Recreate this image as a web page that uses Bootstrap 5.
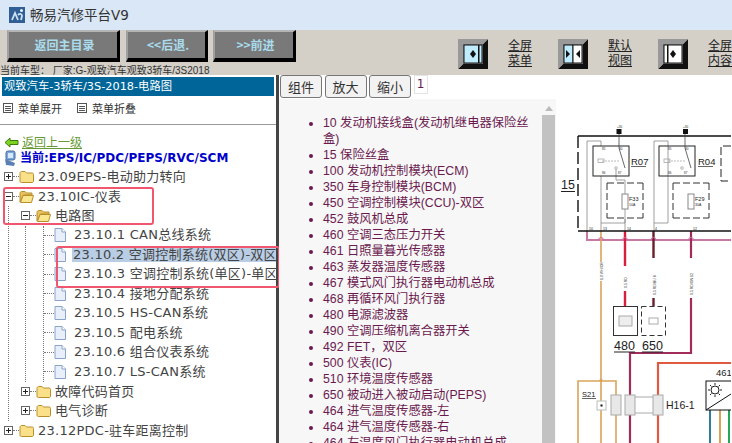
<!DOCTYPE html>
<html lang="zh-CN">
<head>
<meta charset="UTF-8">
<title>畅易汽修平台V9</title>
<link href="https://cdn.jsdelivr.net/npm/bootstrap@5.3.0/dist/css/bootstrap.min.css" rel="stylesheet">
<style>
html, body { height: 100%; overflow: hidden; }
body { font-family: "DejaVu Sans", "Noto Sans CJK SC", sans-serif; font-size: 13px; color: #444; background: #fff; }
.title-bar { height: 30px; background: #d9e7f6; padding-left: 9px; gap: 5px; font-size: 13.5px; color: #333; }
.tool-bar { height: 45px; background: #d4d0c8; overflow: hidden; }
.tool-left { width: 458px; flex: none; }
.tool-btn { height: 32px; background: #797979; color: #a9dcec; font-weight: 700; font-size: 12px; border-style: solid; border-width: 2px 3px 4px 2px; border-color: #b5b5b5 #000 #000 #a0a0a0; border-radius: 0; padding: 0 0 0 3px; font-family: "Noto Sans CJK SC", sans-serif; }
.tool-btn:hover { background: #797979; color: #a9dcec; border-color: #b5b5b5 #000 #000 #a0a0a0; }
.btn-a { width: 113px; margin-left: 7px; }
.btn-b { width: 82px; margin-left: 6px; }
.btn-c { width: 83px; margin-left: 5px; }
.car-line { font-size: 10px; line-height: 11px; height: 13px; padding-top: 3px; color: #333; white-space: nowrap; font-family: "Liberation Sans", "Noto Sans CJK SC", sans-serif; }
.view-group { width: 100px; flex: none; margin-top: 9px; }
.view-label { margin-left: 20px; width: 24px; font-size: 12px; line-height: 15px; color: #222; text-decoration: underline; white-space: nowrap; font-family: "DejaVu Sans", "Noto Sans CJK SC", sans-serif; }
.main-area { height: 368px; }
.left-pane { width: 276px; flex: none; position: relative; }
.split-bar { width: 3px; flex: none; background: #444; }
.pane-head { margin: 2px 2px 0; width: 272px; height: 19px; background: #006699; color: #fff; font-size: 11.3px; line-height: 19px; padding-left: 2px; white-space: nowrap; }
.menu-ops { height: 29px; gap: 15px; padding-left: 3px; font-size: 11px; color: #333; border-bottom: 1px solid #999; padding-bottom: 4px; font-family: "Noto Sans CJK SC", sans-serif; }
.menu-ops span { gap: 5px; }
.op-box { width: 10px; height: 10px; border: 1px solid #555; background: repeating-linear-gradient(#555 0 1px, #fff 1px 2px); background-clip: content-box; padding: 1px; }
.back-link { height: 16px; margin-top: 9px; padding-left: 4px; gap: 3px; font-size: 12px; color: #669933; text-decoration: underline; font-family: "Noto Sans CJK SC", sans-serif; }
.now-line { height: 16px; padding-left: 3px; gap: 2px; font-size: 12px; font-weight: 700; color: #0000cc; white-space: nowrap; }
.tree-box { white-space: nowrap; padding-top: 1px; overflow: hidden; letter-spacing: .25px; }
.tree-row { height: 19.5px; }
.tree-row svg { flex: none; }
.tree-toggle { width: 9px; height: 9px; flex: none; border: 1px solid #666; background: linear-gradient(#222,#222) center/5px 1px no-repeat, #fff; margin-left: 4px; }
.tree-toggle.is-plus { background: linear-gradient(#222,#222) center/5px 1px no-repeat, linear-gradient(#222,#222) center/1px 5px no-repeat, #fff; }
.tree-dots { width: 6px; flex: none; border-top: 1px dotted #777; }
.tree-name { margin-left: 4px; }
.tree-kids { border-left: 1px dotted #777; margin-left: 8px; padding-left: 8px; }
.tree-kids .tree-toggle { margin-left: 4px; }
.leaf-wrap { border-left: 1px dotted #777; margin-left: 8px; padding-left: 17px; }
.leaf-list { border-left: 1px dotted #777; }
.leaf-dots { width: 10px; flex: none; border-top: 1px dotted #777; }
.leaf-name { flex: none; margin-left: 7px; padding: 0 1px; line-height: 14px; }
.leaf-on { background: #b9cde5; margin-left: 6px; }
.mark-box { position: absolute; border: 2px solid #f0566e; border-radius: 3px; pointer-events: none; }
.mark-one { left: 3px; top: 112px; width: 151px; height: 38px; }
.mark-two { left: 56px; top: 171px; width: 224px; height: 42px; }
.right-pane { min-width: 0; }
.tab-strip { height: 24px; gap: 2.5px; padding-left: 1px; }
.tab-btn { width: 42px; height: 23px; padding: 0; font-size: 13px; line-height: 20px; color: #333; background: #f2f2f2; border: 1px solid #777; border-radius: 3px; font-family: "Noto Sans CJK SC", sans-serif; }
.tab-num { width: 14px; height: 19px; border: 1px solid #e4e4e4; text-align: center; line-height: 17px; font-size: 12px; color: #6b1a4f; }
.work-area { height: 344px; }
.part-pane { width: 277px; flex: none; background: #f7f7f7; overflow: hidden; position: relative; }
.part-list { width: 262px; margin: 16px 0 0; padding: 0 10px 0 44px; list-style: disc; font-size: 12.3px; line-height: 16px; color: #6b1a4f; font-family: "Liberation Sans", "Noto Sans CJK SC", sans-serif; }
.scroll-rail { position: absolute; right: 1px; top: 0; bottom: 0; width: 13px; }
.scroll-up { width: 0; height: 0; margin: 7px auto 4px; border: 4px solid transparent; border-top: 0; border-bottom: 5px solid #bbb; }
.scroll-thumb { height: 330px; background: #c2c2c2; }
.wire-map { display: block; flex: none; }
.wire-map text { font-family: "Liberation Sans", sans-serif; fill: #222; }
</style>
</head>
<body>
<div class="title-bar d-flex align-items-center">
  <svg width="16" height="16" viewBox="0 0 16 16"><rect width="16" height="16" fill="#2f5f94"/><path d="M3 13 6 6l3 7M9 8c2-2 4-1 4 1l-1 4" fill="none" stroke="#cfe3f5" stroke-width="1.800"/><circle cx="12.500" cy="3.500" r="1.500" fill="#e7f1fa"/></svg>
  <span>畅易汽修平台V9</span>
</div>
<div class="tool-bar d-flex">
  <div class="tool-left">
    <div class="d-flex">
      <button class="btn tool-btn btn-a">返回主目录</button>
      <button class="btn tool-btn btn-b">&lt;&lt;后退.</button>
      <button class="btn tool-btn btn-c">&gt;&gt;前进</button>
    </div>
    <div class="car-line">当前车型： 厂家:G-观致汽车观致3轿车/3S2018</div>
  </div>
  <div class="view-group d-flex">
    <svg width="30" height="30" viewBox="0 0 30 30"><path d="M0 30 30 30 30 0 25 5 25 25 5 25Z" fill="#111"/><path d="M0 0H30L25 5H5V25L0 30Z" fill="#999"/><rect x="5" y="5" width="20" height="20" fill="#808080"/><rect x="6" y="6" width="18" height="18" fill="#c0ecff" stroke="#111"/><rect x="20" y="6" width="1.500" height="18" fill="#111"/><path d="M12 15 15 11V19ZM15 11 18 15 15 19Z" fill="#111"/></svg>
    <div class="view-label">全屏<br>菜单</div>
  </div>
  <div class="view-group d-flex">
    <svg width="30" height="30" viewBox="0 0 30 30"><path d="M0 30 30 30 30 0 25 5 25 25 5 25Z" fill="#111"/><path d="M0 0H30L25 5H5V25L0 30Z" fill="#999"/><rect x="5" y="5" width="20" height="20" fill="#808080"/><rect x="6" y="6" width="9" height="18" fill="#c0ecff" stroke="#111"/><rect x="15" y="6" width="9" height="18" fill="#fff" stroke="#111"/><path d="M8 11 12 15 8 19ZM22 11 18 15 22 19Z" fill="#111"/></svg>
    <div class="view-label">默认<br>视图</div>
  </div>
  <div class="view-group d-flex">
    <svg width="30" height="30" viewBox="0 0 30 30"><path d="M0 30 30 30 30 0 25 5 25 25 5 25Z" fill="#111"/><path d="M0 0H30L25 5H5V25L0 30Z" fill="#999"/><rect x="5" y="5" width="20" height="20" fill="#808080"/><rect x="6" y="6" width="18" height="18" fill="#fff" stroke="#111"/><rect x="9" y="6" width="1.500" height="18" fill="#111"/><path d="M12 15 15 11V19ZM15 11 18 15 15 19Z" fill="#111"/></svg>
    <div class="view-label">全屏<br>内容</div>
  </div>
</div>
<div class="main-area d-flex">
  <div class="left-pane">
    <div class="pane-head">观致汽车-3轿车/3S-2018-电路图</div>
    <div class="menu-ops d-flex align-items-center">
      <span class="d-flex align-items-center"><i class="op-box"></i>菜单展开</span>
      <span class="d-flex align-items-center"><i class="op-box"></i>菜单折叠</span>
    </div>
    <div class="back-link d-flex align-items-center">
      <svg width="15" height="11" viewBox="0 0 15 11"><path d="M1 5.500 6 1V3.500H14V7.500H6V10Z" fill="#7ed321" stroke="#3c7a10"/></svg>
      <span>返回上一级</span>
    </div>
    <div class="now-line d-flex align-items-center">
      <svg width="15" height="17" viewBox="0 0 15 17"><rect x="3" y="1" width="9" height="9" rx="2" fill="#7aa7e0" stroke="#46699a"/><path d="M5 3h5v5H5z" fill="#d7e9ff"/><path d="M2 9 12 13 11 16 3 15Z" fill="#5a7fb5"/></svg>
      <span>当前:EPS/IC/PDC/PEPS/RVC/SCM</span>
    </div>
    <div class="tree-box">
      <div class="tree-row d-flex align-items-center"><i class="tree-toggle is-plus"></i><i class="tree-dots"></i><svg width="15" height="13" viewBox="0 0 15 13"><use href="#shut-folder"/></svg><span class="tree-name">23.09EPS-电动助力转向</span></div>
      <div class="tree-row d-flex align-items-center"><i class="tree-toggle"></i><i class="tree-dots"></i><svg width="15" height="13" viewBox="0 0 15 13"><use href="#open-folder"/></svg><span class="tree-name">23.10IC-仪表</span></div>
      <div class="tree-kids">
        <div class="tree-row d-flex align-items-center"><i class="tree-toggle"></i><i class="tree-dots"></i><svg width="15" height="13" viewBox="0 0 15 13"><use href="#open-folder"/></svg><span class="tree-name">电路图</span></div>
        <div class="leaf-wrap">
          <div class="leaf-list">
            <div class="tree-row d-flex align-items-center"><i class="leaf-dots"></i><svg width="12" height="14" viewBox="0 0 12 14"><use href="#page-doc"/></svg><span class="leaf-name">23.10.1 CAN总线系统</span></div>
            <div class="tree-row d-flex align-items-center"><i class="leaf-dots"></i><svg width="12" height="14" viewBox="0 0 12 14"><use href="#page-doc"/></svg><span class="leaf-name leaf-on">23.10.2 空调控制系统(双区)-双区</span></div>
            <div class="tree-row d-flex align-items-center"><i class="leaf-dots"></i><svg width="12" height="14" viewBox="0 0 12 14"><use href="#page-doc"/></svg><span class="leaf-name">23.10.3 空调控制系统(单区)-单区</span></div>
            <div class="tree-row d-flex align-items-center"><i class="leaf-dots"></i><svg width="12" height="14" viewBox="0 0 12 14"><use href="#page-doc"/></svg><span class="leaf-name">23.10.4 接地分配系统</span></div>
            <div class="tree-row d-flex align-items-center"><i class="leaf-dots"></i><svg width="12" height="14" viewBox="0 0 12 14"><use href="#page-doc"/></svg><span class="leaf-name">23.10.5 HS-CAN系统</span></div>
            <div class="tree-row d-flex align-items-center"><i class="leaf-dots"></i><svg width="12" height="14" viewBox="0 0 12 14"><use href="#page-doc"/></svg><span class="leaf-name">23.10.5 配电系统</span></div>
            <div class="tree-row d-flex align-items-center"><i class="leaf-dots"></i><svg width="12" height="14" viewBox="0 0 12 14"><use href="#page-doc"/></svg><span class="leaf-name">23.10.6 组合仪表系统</span></div>
            <div class="tree-row d-flex align-items-center"><i class="leaf-dots"></i><svg width="12" height="14" viewBox="0 0 12 14"><use href="#page-doc"/></svg><span class="leaf-name">23.10.7 LS-CAN系统</span></div>
          </div>
        </div>
        <div class="tree-row d-flex align-items-center"><i class="tree-toggle is-plus"></i><i class="tree-dots"></i><svg width="15" height="13" viewBox="0 0 15 13"><use href="#shut-folder"/></svg><span class="tree-name">故障代码首页</span></div>
        <div class="tree-row d-flex align-items-center"><i class="tree-toggle is-plus"></i><i class="tree-dots"></i><svg width="15" height="13" viewBox="0 0 15 13"><use href="#shut-folder"/></svg><span class="tree-name">电气诊断</span></div>
      </div>
      <div class="tree-row d-flex align-items-center"><i class="tree-toggle is-plus"></i><i class="tree-dots"></i><svg width="15" height="13" viewBox="0 0 15 13"><use href="#shut-folder"/></svg><span class="tree-name">23.12PDC-驻车距离控制</span></div>
    </div>
    <div class="mark-box mark-one"></div>
    <div class="mark-box mark-two"></div>
  </div>
  <div class="split-bar"></div>
  <div class="right-pane flex-grow-1">
    <div class="tab-strip d-flex align-items-start">
      <button class="btn tab-btn">组件</button>
      <button class="btn tab-btn">放大</button>
      <button class="btn tab-btn">缩小</button>
      <span class="tab-num">1</span>
    </div>
    <div class="work-area d-flex">
      <div class="part-pane">
        <ul class="part-list">
          <li>10 发动机接线盒(发动机继电器保险丝盒)</li>
          <li>15 保险丝盒</li>
          <li>100 发动机控制模块(ECM)</li>
          <li>350 车身控制模块(BCM)</li>
          <li>450 空调控制模块(CCU)-双区</li>
          <li>452 鼓风机总成</li>
          <li>460 空调三态压力开关</li>
          <li>461 日照量暮光传感器</li>
          <li>463 蒸发器温度传感器</li>
          <li>467 模式风门执行器电动机总成</li>
          <li>468 再循环风门执行器</li>
          <li>480 电源滤波器</li>
          <li>490 空调压缩机离合器开关</li>
          <li>492 FET，双区</li>
          <li>500 仪表(IC)</li>
          <li>510 环境温度传感器</li>
          <li>650 被动进入被动启动(PEPS)</li>
          <li>464 进气温度传感器-左</li>
          <li>464 进气温度传感器-右</li>
          <li>464 左温度风门执行器电动机总成</li>
        </ul>
        <div class="scroll-rail"><div class="scroll-up"></div><div class="scroll-thumb"></div></div>
      </div>
      <svg class="wire-map" width="175" height="344" viewBox="557 99 175 344" fill="none">
        <!-- pink bus and wires -->
        <path d="M588 231V240H732" stroke="#c779a6" stroke-width="2"/>
        <path d="M602 231V262M602 281V381M602 381V443M579 443V381H617V443" stroke="#d9a45a" stroke-width="1.600"/>
        <path d="M626 231V266M626 291V306" stroke="#d8203c" stroke-width="2.400"/>
        <path d="M654.500 231V258M654.500 298V306" stroke="#6a1f2c" stroke-width="2.400"/>
        <path d="M692 231V258M692 298V353H631V443" stroke="#a02c5c" stroke-width="2.200"/>
        <path d="M732 363H659V443" stroke="#e05a40" stroke-width="2.200"/>
        <path d="M711 410V443" stroke="#2f7f93" stroke-width="2"/>
        <path d="M721 410V443" stroke="#d9a45a" stroke-width="2"/>
        <path d="M730 410V443" stroke="#27a35a" stroke-width="2"/>
        <!-- gray internal wiring -->
        <path d="M588 231V141H602V146M602 176V231M602 223H626V219M617 168V180H626V231M655 231V141H669V146M669 146V223H655" stroke="#888" stroke-width=".8"/>
        <!-- housing -->
        <path d="M732 136H579" stroke="#111" stroke-width="1.400"/>
        <path d="M579 136V231" stroke="#111" stroke-width="1.400" stroke-dasharray="12 4"/>
        <path d="M579 231H732" stroke="#111" stroke-width="1.600"/>
        <rect x="594" y="146" width="36" height="30" stroke="#222"/>
        <rect x="660" y="146" width="36" height="30" stroke="#222"/>
        <path d="M732 146H722V181H732" stroke="#222" stroke-dasharray="8 3"/>
        <path d="M620 133V148L626 168M686 133V148L692 168" stroke="#444" stroke-width=".8"/>
        <rect x="617.500" y="129" width="5" height="5" fill="#111"/>
        <rect x="684" y="129" width="5" height="5" fill="#111"/>
        <path d="M603 161H620M669 161H686" stroke="#bbb" stroke-dasharray="2 1"/>
        <rect x="599" y="159" width="6" height="3.500" stroke="#999" stroke-width=".7"/>
        <rect x="665" y="159" width="6" height="3.500" stroke="#999" stroke-width=".7"/>
        <circle cx="617" cy="168" r="1.300" fill="#fff" stroke="#888" stroke-width=".6"/>
        <circle cx="683" cy="168" r="1.300" fill="#fff" stroke="#888" stroke-width=".6"/>
        <path d="M608 183H644M608 218H644M608 183V218M644 183V218M674 183H710M674 218H710M674 183V218M710 183V218" stroke="#333" stroke-dasharray="7 3"/>
        <rect x="623" y="194" width="6" height="15" fill="#fff" stroke="#888"/>
        <rect x="689" y="194" width="6" height="15" fill="#fff" stroke="#888"/>
        <path d="M602 240m-2.500 0a2.500 2.500 0 0 1 5 0M626 240m-2.500 0a2.500 2.500 0 0 1 5 0M654.500 240m-2.500 0a2.500 2.500 0 0 1 5 0M692 240m-2.500 0a2.500 2.500 0 0 1 5 0" stroke="#d36aa0" stroke-width="1"/>
        <text x="562" y="189" font-size="12.500">15</text><path d="M562 191.500H576" stroke="#222"/>
        <text x="632" y="165" font-size="9.500">R07</text><path d="M632 166.500H647" stroke="#222" stroke-width=".7"/>
        <text x="699" y="165" font-size="9.500">R04</text><path d="M699 166.500H714" stroke="#222" stroke-width=".7"/>
        <text x="630" y="201" font-size="5.500">F33</text><text x="630" y="206" font-size="3.500">10A</text>
        <text x="696" y="201" font-size="5.500">F29</text><text x="696" y="206" font-size="3.500">30A</text>
        <text x="618" y="128" font-size="3">+30</text><text x="684" y="128" font-size="3">+30</text>
        <text x="603" y="150" font-size="3">85</text><text x="620" y="150" font-size="3">30</text><text x="603" y="174" font-size="3">86</text><text x="619" y="174" font-size="3">87</text>
        <text x="669" y="150" font-size="3">85</text><text x="686" y="150" font-size="3">30</text><text x="669" y="174" font-size="3">86</text><text x="685" y="174" font-size="3">87</text>
        <text x="590" y="230" font-size="3.500">10</text><text x="604" y="230" font-size="3.500">13</text><text x="628" y="230" font-size="3.500">14</text><text x="656" y="230" font-size="3.500">4</text><text x="694" y="230" font-size="3.500">12</text>
        <text transform="translate(604 280) rotate(-90)" font-size="3.500">1.0 WH/OR</text>
        <text transform="translate(628 288) rotate(-90)" font-size="3.500">0.5 RD</text>
        <text transform="translate(656.500 295) rotate(-90)" font-size="3.500">0.5 RD/BU 8</text>
        <text transform="translate(694 295) rotate(-90)" font-size="3.500">0.5 RD/GN 12</text>
        <!-- 480 / 650 -->
        <rect x="614.500" y="306.500" width="24" height="29" fill="#fff" stroke="#333"/>
        <rect x="642.500" y="306.500" width="24" height="29" fill="#fff" stroke="#333" stroke-dasharray="5 3"/>
        <rect x="620" y="316" width="13" height="10" stroke="#aaa" fill="#eee"/>
        <rect x="650" y="318" width="9" height="6" stroke="#aaa"/>
        <text x="615" y="350" font-size="12.500">480</text><path d="M615 352H636" stroke="#222"/>
        <text x="643" y="350" font-size="12.500">650</text><path d="M643 352H664" stroke="#222"/>
        <!-- S21 -->
        <text x="583" y="397" font-size="7.500">S21</text><path d="M583 398.500H597" stroke="#222" stroke-width=".7"/>
        <rect x="598" y="401" width="9" height="9" fill="#fff" stroke="#bbb"/><rect x="601.500" y="404.500" width="2" height="2" fill="#111"/>
        <circle cx="602" cy="380" r="1.500" fill="#d9a45a"/>
        <!-- H16-1 -->
        <path d="M636 397H654M636 413H654" stroke="#aaa"/>
        <rect x="612" y="395" width="10" height="20" fill="#e8e8e8" stroke="#aaa"/>
        <rect x="626" y="395" width="10" height="20" fill="#e8e8e8" stroke="#aaa"/>
        <rect x="654" y="395" width="10" height="20" fill="#e8e8e8" stroke="#aaa"/>
        <text x="667" y="409" font-size="10.500">H16-1</text>
        <!-- 461 -->
        <text x="717" y="376" font-size="9.500">461</text>
        <rect x="707" y="381" width="30" height="29" fill="#fff" stroke="#111"/>
        <path d="M707 410 732 394" stroke="#111"/>
        <circle cx="716" cy="390" r="4" stroke="#222"/>
        <path d="M716 383V385M716 395V397M709 390H711M721 390H723M711 385 712.500 386.500M719.500 393.500 721 395M711 395 712.500 393.500M719.500 386.500 721 385" stroke="#222"/>
      </svg>
    </div>
  </div>
</div>
<svg width="0" height="0" class="position-absolute">
  <defs>
    <g id="shut-folder"><path d="M1 3.500C1 2 2 1.500 3 1.500H6L7.500 3H13C14 3 14.500 3.500 14.500 4.500V11C14.500 12 14 12.500 13 12.500H2.500C1.500 12.500 1 12 1 11Z" fill="#fbe08a" stroke="#b98f2c"/></g>
    <g id="open-folder"><path d="M1 3.500C1 2 2 1.500 3 1.500H6L7.500 3H13V5H4.500L1 12Z" fill="#e9c25c" stroke="#b98f2c"/><path d="M4 5.500H14.500L12.500 12.500H1.500Z" fill="#fbe690" stroke="#b98f2c"/></g>
    <g id="page-doc"><path d="M1 .5H8L11.500 4V13.500H1Z" fill="#e8effa" stroke="#8aa3c8"/><path d="M8 .5V4H11.500" fill="#fff" stroke="#8aa3c8"/></g>
  </defs>
</svg>
<script src="https://cdn.jsdelivr.net/npm/bootstrap@5.3.0/dist/js/bootstrap.bundle.min.js"></script>
</body>
</html>
